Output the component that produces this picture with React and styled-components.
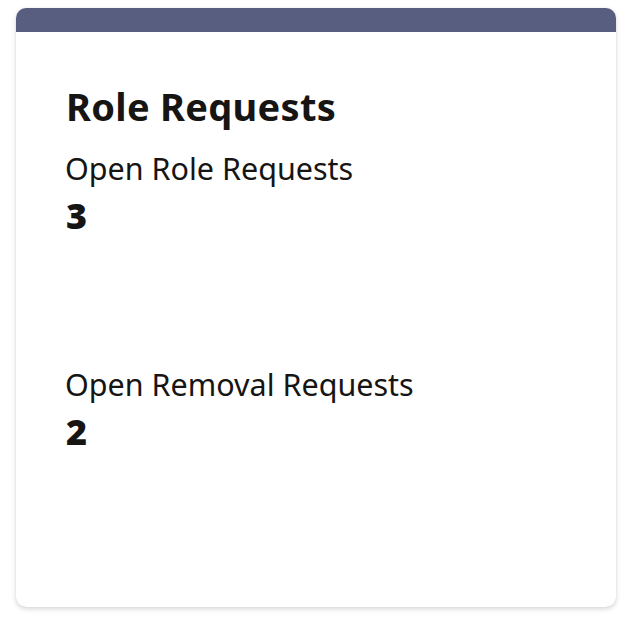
import React from "react";
import styled, { createGlobalStyle } from "styled-components";

const Global = createGlobalStyle`
  html, body {
    margin: 0;
    padding: 0;
    background: #ffffff;
  }
  body {
    font-family: "Noto Sans", "Open Sans", sans-serif;
    color: #161513;
  }
`;

const stats = [
  { label: "Open Role Requests", value: 3 },
  { label: "Open Removal Requests", value: 2 },
];

function App() {
  return (
    <>
      <Global />
      <Page>
        <Card>
          <TopBar />
          <Body>
            <Title>Role Requests</Title>
            {stats.map((s) => (
              <Stat key={s.label}>
                <Label>{s.label}</Label>
                <Value>{s.value}</Value>
              </Stat>
            ))}
          </Body>
        </Card>
      </Page>
    </>
  );
}

const Page = styled.div`
  padding: 8px 22px 19px 16px;
`;

const Card = styled.section`
  height: 599px;
  background: #ffffff;
  border-radius: 10px;
  overflow: hidden;
  box-shadow: 0 2px 5px rgba(0, 0, 0, 0.16), 0 0 1px rgba(0, 0, 0, 0.14);
  display: flex;
  flex-direction: column;
`;

const TopBar = styled.div`
  height: 24px;
  background: #575e80;
  flex: none;
`;

const Body = styled.div`
  padding: 52px 50px 0;
  display: flex;
  flex-direction: column;
`;

const Title = styled.h2`
  margin: 0 0 22px;
  font-size: 38px;
  font-weight: 700;
  line-height: 44px;
  letter-spacing: 0.3px;
`;

const Stat = styled.div`
  height: 216px;
  display: flex;
  flex-direction: column;
`;

const Label = styled.div`
  margin-left: -1px;
  font-size: 30.5px;
  font-weight: 400;
  line-height: 36px;
`;

const Value = styled.div`
  margin-top: 10px;
  font-size: 36px;
  font-weight: 900;
  line-height: 40px;
`;

export default App;
